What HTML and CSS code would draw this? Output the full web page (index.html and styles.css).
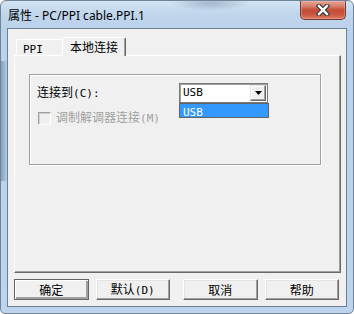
FILE: index.html
```html
<!DOCTYPE html>
<html>
<head>
<meta charset="utf-8">
<link rel="stylesheet" href="styles.css">
</head>
<body>
<div class="window">
  <div class="titlebar">
    <span class="title">属性 - PC/PPI cable.PPI.1</span>
    <div class="close">
      <svg width="14" height="12" viewBox="0 0 14 12">
        <path d="M3 2 L11 10 M11 2 L3 10" stroke="#3b3b3b" stroke-width="4.6" stroke-linecap="square" fill="none"/>
        <path d="M3 2 L11 10 M11 2 L3 10" stroke="#ffffff" stroke-width="2.4" stroke-linecap="square" fill="none"/>
      </svg>
    </div>
  </div>
  <div class="client">
    <div class="tabstrip">
      <div class="tab"><span class="lat">PPI</span></div>
      <div class="tab active">本地连接</div>
    </div>
    <div class="panel">
      <div class="group">
        <div class="row">
          <span class="label">连接到<span class="lat">(C):</span></span>
          <div class="combo">
            <span class="combo-text lat">USB</span>
            <span class="combo-btn">
              <svg width="7" height="4" viewBox="0 0 7 4"><path d="M0 0 H7 L3.5 4 Z" fill="#000"/></svg>
            </span>
            <div class="combo-list"><span class="lat">USB</span></div>
          </div>
        </div>
        <div class="row check-row">
          <span class="checkbox"></span>
          <span class="check-label">调制解调器连接<span class="lat">(M)</span></span>
        </div>
      </div>
    </div>
    <div class="buttons">
      <button class="btn default">确定</button>
      <button class="btn">默认<span class="lat">(D)</span></button>
      <button class="btn wide-gap">取消</button>
      <button class="btn">帮助</button>
    </div>
  </div>
</div>
</body>
</html>
```

FILE: styles.css
```css
html, body {
  margin: 0;
  padding: 0;
}

body {
  width: 354px;
  height: 314px;
  overflow: hidden;
}

.window {
  box-sizing: border-box;
  width: 354px;
  height: 314px;
  border: 1px solid #6f8399;
  border-radius: 6px 6px 5px 5px;
  background:
    linear-gradient(to right, rgba(60, 105, 120, 0.45), rgba(60, 105, 120, 0) 7px) 0 60px / 8px 120px no-repeat,
    radial-gradient(ellipse 40px 8px at 210px 2px, rgba(120, 140, 165, 0.5), rgba(120, 140, 165, 0)),
    linear-gradient(180deg, #d3e3f3 0px, #bfd5ec 14px, #b9d1ea 30px, #bdd4ec 100%);
  display: flex;
  flex-direction: column;
}

.titlebar {
  height: 27px;
  display: flex;
  align-items: flex-start;
}

.title {
  margin-left: 7px;
  margin-top: 7px;
  font-family: "Noto Sans", "Noto Sans CJK SC", sans-serif;
  font-size: 12px;
  line-height: 15px;
  color: #000;
}

.close {
  box-sizing: border-box;
  margin-left: auto;
  margin-right: 7px;
  width: 46px;
  height: 19px;
  border: 1px solid #6e3a33;
  border-top: none;
  border-radius: 0 0 5px 5px;
  background: linear-gradient(180deg, #e6a396 0px, #d8826f 5px, #c54b37 9px, #c9543f 13px, #dd7a60 18px);
  display: flex;
  align-items: center;
  justify-content: center;
  box-shadow: inset 0 0 0 1px rgba(255, 200, 190, 0.35);
}

.close svg {
  display: block;
  margin-top: -1px;
}

.client {
  box-sizing: border-box;
  margin: 0 6px 6px 6px;
  flex: 1;
  border: 1px solid #6c7f94;
  background: #f0f0f0;
  display: flex;
  flex-direction: column;
  font-family: "Noto Sans CJK SC", sans-serif;
  font-size: 12px;
  color: #000;
}

.lat {
  font-family: "DejaVu Sans Mono", "Liberation Mono", monospace;
  font-size: 11px;
}

.tabstrip {
  margin-top: 8px;
  margin-left: 8px;
  height: 18px;
  display: flex;
  align-items: flex-end;
  position: relative;
  z-index: 2;
}

.tab {
  box-sizing: border-box;
  height: 16px;
  width: 48px;
  padding-left: 6px;
  border-top: 1px solid #ffffff;
  border-left: 1px solid #ffffff;
  border-right: 1px solid #a0a0a0;
  border-radius: 2px 2px 0 0;
  line-height: 15px;
  background: #f0f0f0;
}

.tab.active {
  height: 19px;
  width: 64px;
  margin-left: -2px;
  margin-bottom: -1px;
  padding-left: 0;
  text-align: center;
  border-right: 1px solid #696969;
  box-shadow: inset -1px 0 0 #a0a0a0;
  line-height: 17px;
}

.panel {
  box-sizing: border-box;
  margin-left: 6px;
  width: 327px;
  height: 218px;
  border-top: 1px solid #ffffff;
  border-left: 1px solid #ffffff;
  border-right: 1px solid #696969;
  border-bottom: 1px solid #696969;
  box-shadow: inset -1px -1px 0 #a0a0a0;
  padding: 18px 0 0 14px;
  position: relative;
  z-index: 1;
}

.group {
  box-sizing: border-box;
  width: 292px;
  height: 91px;
  border: 1px solid #a0a0a0;
  box-shadow: inset 1px 1px 0 #ffffff, 1px 1px 0 #ffffff;
  display: flex;
  flex-direction: column;
}

.row {
  display: flex;
  align-items: center;
}

.row:first-child {
  margin-top: 8px;
  height: 20px;
}

.label {
  width: 142px;
  margin-left: 7px;
  line-height: 16px;
}

.combo {
  box-sizing: border-box;
  position: relative;
  width: 89px;
  height: 20px;
  background: #ffffff;
  border: 1px solid #7a7a7a;
  box-shadow: inset 1px 1px 0 #a0a0a0;
  display: flex;
  align-items: center;
}

.combo-text {
  margin-left: 3px;
  line-height: 16px;
}

.combo-btn {
  box-sizing: border-box;
  margin-left: auto;
  margin-right: 1px;
  width: 16px;
  height: 16px;
  background: #f0f0f0;
  border-top: 1px solid #e3e3e3;
  border-left: 1px solid #e3e3e3;
  border-right: 1px solid #696969;
  border-bottom: 1px solid #696969;
  box-shadow: inset -1px -1px 0 #a0a0a0, inset 1px 1px 0 #ffffff;
  display: flex;
  align-items: center;
  justify-content: center;
}

.combo-btn svg {
  display: block;
}

.combo-list {
  box-sizing: border-box;
  position: absolute;
  left: -1px;
  top: 19px;
  width: 90px;
  height: 15px;
  border: 1px solid #646464;
  background: #3399ff;
  color: #ffffff;
  padding-left: 3px;
  line-height: 13px;
}

.check-row {
  margin-top: 6px;
  margin-left: 8px;
}

.checkbox {
  box-sizing: border-box;
  width: 13px;
  height: 13px;
  border-top: 1px solid #a0a0a0;
  border-left: 1px solid #a0a0a0;
  border-right: 1px solid #ffffff;
  border-bottom: 1px solid #ffffff;
  box-shadow: inset 1px 1px 0 #d0d0d0;
  background: #f0f0f0;
}

.check-label {
  margin-left: 5px;
  color: #a0a0a0;
  line-height: 16px;
}

.buttons {
  display: flex;
  margin-top: 6px;
  margin-left: 6px;
}

.btn {
  box-sizing: border-box;
  width: 75px;
  height: 21px;
  margin: 0 7px 0 0;
  padding: 0;
  background: #f0f0f0;
  border-top: 1px solid #ffffff;
  border-left: 1px solid #ffffff;
  border-right: 1px solid #696969;
  border-bottom: 1px solid #696969;
  box-shadow: inset -1px -1px 0 #a0a0a0, inset 1px 1px 0 #e3e3e3;
  font-family: "Noto Sans CJK SC", sans-serif;
  font-size: 12px;
  line-height: 17px;
  color: #000;
}

.btn.default {
  border: 1px solid #646464;
  box-shadow: inset 1px 1px 0 #ffffff, inset -2px -2px 0 #a0a0a0;
}

.btn.wide-gap {
  margin-left: 6px;
}
```
